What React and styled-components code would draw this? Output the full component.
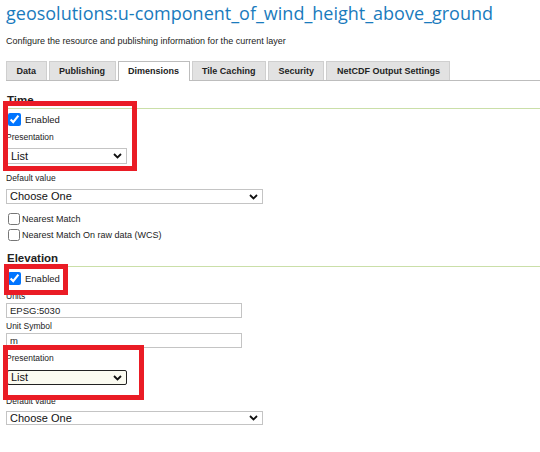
import React from "react";
import styled, { createGlobalStyle } from "styled-components";

const GlobalStyle = createGlobalStyle`
  html, body { margin: 0; padding: 0; background: #fff; }
  body { font-family: "Liberation Sans", Arial, sans-serif; color: #222; }
  * { box-sizing: border-box; }
`;

const Page = styled.div`
  position: relative;
  width: 540px;
  height: 452px;
  overflow: hidden;
  padding-left: 6px;
`;

const Title = styled.h1`
  margin: 0;
  padding-top: 1px;
  font-family: "Open Sans", "Liberation Sans", sans-serif;
  font-weight: 400;
  font-size: 18px;
  line-height: 24px;
  color: #1a7bbd;
  white-space: nowrap;
`;

const Subtitle = styled.p`
  margin: 10px 0 0;
  font-size: 9px;
  line-height: 12px;
  color: #222;
`;

const TabBar = styled.div`
  display: flex;
  gap: 2px;
  margin-top: 14px;
  border-bottom: 1px solid #bdbdbd;
  height: 20px;
  align-items: flex-end;
`;

const Tab = styled.div`
  height: ${(p) => (p.$active ? "20px" : "19px")};
  margin-bottom: ${(p) => (p.$active ? "-1px" : "0")};
  padding: 0 ${(p) => p.$pad}px;
  border: 1px solid ${(p) => (p.$active ? "#bdbdbd" : "#cfcfcf")};
  border-bottom: none;
  background: ${(p) => (p.$active ? "#fff" : "#e2e2e2")};
  font-weight: 700;
  font-size: 9px;
  line-height: 18px;
  color: #222;
  white-space: nowrap;
`;

const SectionTitle = styled.h3`
  margin: ${(p) => p.$mt}px 0 0;
  padding-left: 1px;
  font-size: 11.5px;
  font-weight: 700;
  line-height: 15px;
  color: #222;
  border-bottom: 1px solid #cadfa8;
`;

const CheckRow = styled.label`
  display: flex;
  align-items: center;
  height: ${(p) => p.$h || 16}px;
  margin-top: ${(p) => p.$mt || 0}px;
  font-size: ${(p) => p.$fs || 9}px;
  color: #222;
`;

const Check = styled.input.attrs({ type: "checkbox" })`
  width: ${(p) => (p.$small ? 12 : 13)}px;
  height: ${(p) => (p.$small ? 12 : 13)}px;
  margin: 0 ${(p) => (p.$small ? 2 : 4)}px 0 2px;
`;

const FieldLabel = styled.div`
  margin-top: ${(p) => p.$mt}px;
  font-size: 8.5px;
  line-height: 11px;
  color: #222;
`;

const SelectWrap = styled.div`
  position: relative;
  width: ${(p) => p.$w}px;
  margin-top: ${(p) => p.$mt}px;
  margin-left: ${(p) => p.$ml || 0}px;
`;

const Select = styled.select`
  appearance: none;
  display: block;
  width: 100%;
  height: ${(p) => p.$h}px;
  padding: 0 3px;
  border: 1px solid ${(p) => (p.$focused ? "#222" : "#c4c4c4")};
  border-radius: ${(p) => (p.$focused ? "2px" : "0")};
  background: ${(p) => (p.$focused ? "#fbfbf1" : "#fff")};
  font-family: "Liberation Sans", Arial, sans-serif;
  font-size: 11px;
  line-height: 1;
  color: #111;
  outline: none;
`;

const Chevron = styled.svg`
  position: absolute;
  right: 5px;
  top: 50%;
  margin-top: -3px;
  width: 9px;
  height: 6px;
  pointer-events: none;
`;

const TextInput = styled.input`
  display: block;
  width: 236px;
  height: 15px;
  margin-top: ${(p) => p.$mt}px;
  padding: 0 3px;
  border: 1px solid #c4c4c4;
  font-family: "Liberation Sans", Arial, sans-serif;
  font-size: 9.5px;
  color: #222;
  outline: none;
`;

const Highlight = styled.div`
  position: absolute;
  border: 5px solid #ea1c25;
  pointer-events: none;
`;

function Dropdown({ value, width, height, mt, ml, focused }) {
  return (
    <SelectWrap $w={width} $mt={mt} $ml={ml}>
      <Select $h={height} $focused={focused} defaultValue={value}>
        <option>{value}</option>
      </Select>
      <Chevron viewBox="0 0 9 6">
        <path d="M1 1 L4.5 4.5 L8 1" fill="none" stroke="#111" strokeWidth="1.8" />
      </Chevron>
    </SelectWrap>
  );
}

const tabs = [
  { name: "Data" },
  { name: "Publishing" },
  { name: "Dimensions", active: true },
  { name: "Tile Caching" },
  { name: "Security" },
  { name: "NetCDF Output Settings" },
];

export default function App() {
  return (
    <>
      <GlobalStyle />
      <Page>
        <Title>geosolutions:u-component_of_wind_height_above_ground</Title>
        <Subtitle>Configure the resource and publishing information for the current layer</Subtitle>
        <TabBar>
          {tabs.map((t) => (
            <Tab key={t.name} $active={t.active} $pad={9.5}>
              {t.name}
            </Tab>
          ))}
        </TabBar>

        <SectionTitle $mt={12}>Time</SectionTitle>
        <CheckRow $h={20} $fs={9.5}>
          <Check defaultChecked />
          Enabled
        </CheckRow>
        <FieldLabel $mt={3}>Presentation</FieldLabel>
        <Dropdown value="List" width={120} height={16} mt={5} ml={1} />
        <FieldLabel $mt={9}>Default value</FieldLabel>
        <Dropdown value="Choose One" width={257} height={15} mt={5} />
        <CheckRow $mt={7}>
          <Check $small />
          Nearest Match
        </CheckRow>
        <CheckRow>
          <Check $small />
          Nearest Match On raw data (WCS)
        </CheckRow>

        <SectionTitle $mt={8}>Elevation</SectionTitle>
        <CheckRow $h={22} $fs={9.5}>
          <Check defaultChecked />
          Enabled
        </CheckRow>
        <FieldLabel $mt={2}>Units</FieldLabel>
        <TextInput $mt={1} defaultValue="EPSG:5030" />
        <FieldLabel $mt={3}>Unit Symbol</FieldLabel>
        <TextInput $mt={1} defaultValue="m" />
        <FieldLabel $mt={5}>Presentation</FieldLabel>
        <Dropdown value="List" width={120} height={15} mt={6} ml={1} focused />
        <FieldLabel $mt={11}>Default value</FieldLabel>
        <Dropdown value="Choose One" width={257} height={14} mt={4} />

        <Highlight style={{ left: 3, top: 101, width: 134, height: 70 }} />
        <Highlight style={{ left: 4, top: 264, width: 64, height: 31 }} />
        <Highlight style={{ left: 3, top: 345, width: 141, height: 55 }} />
      </Page>
    </>
  );
}
